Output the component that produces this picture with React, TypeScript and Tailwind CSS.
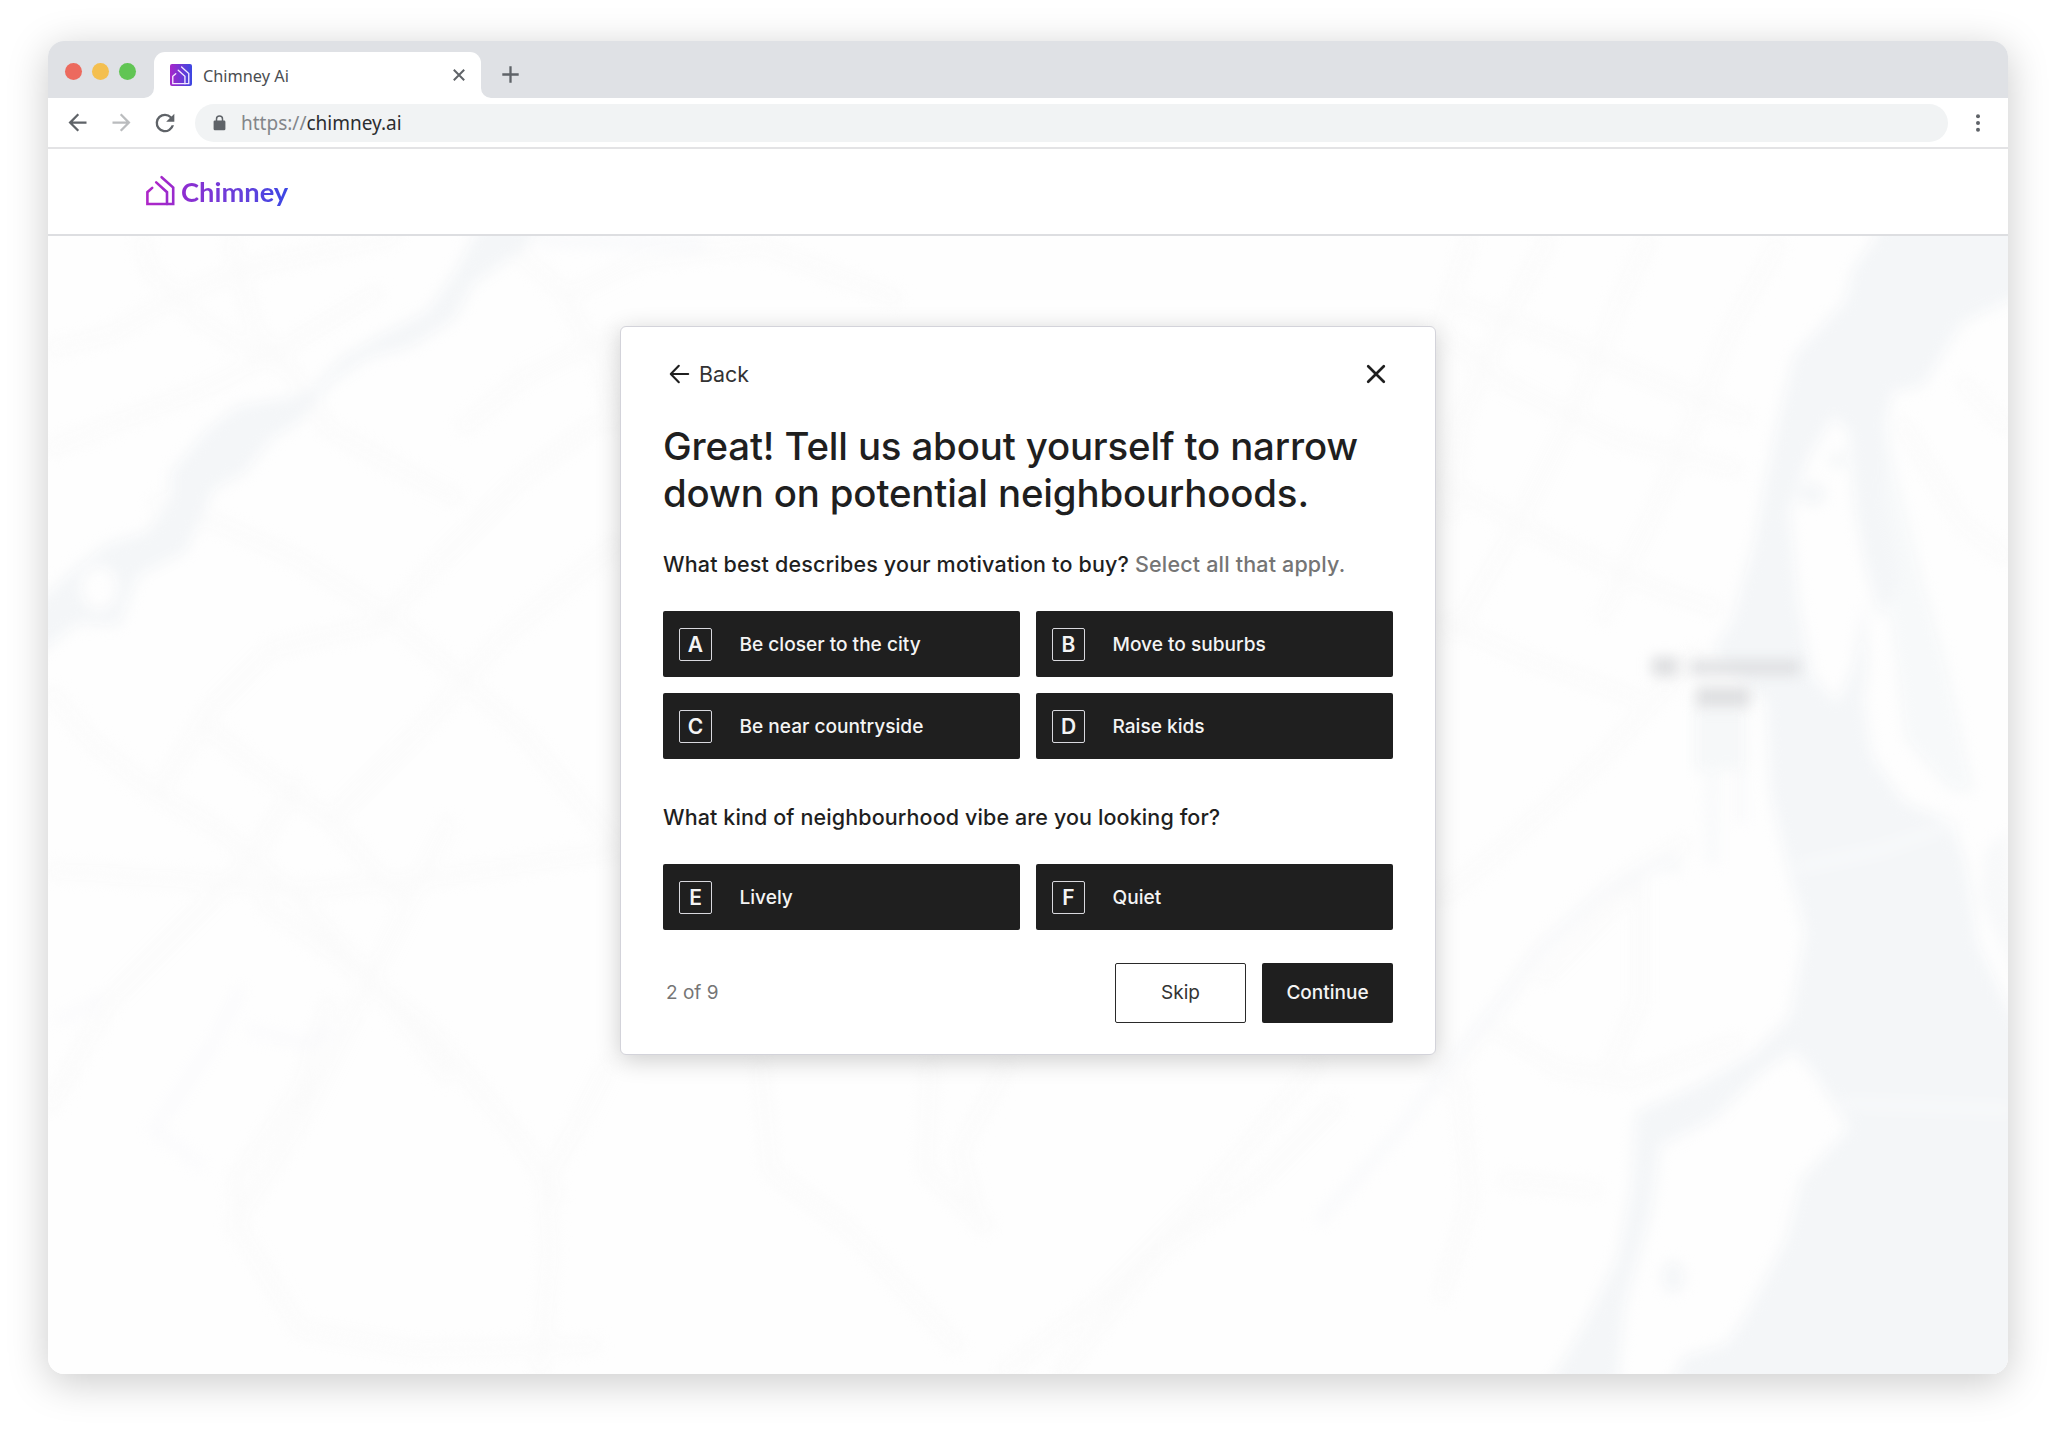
import React from "react";

const SANS = "font-['Inter',sans-serif]";
const NOTO = "font-['Noto_Sans',sans-serif]";

function HouseMark({ stroke, width = 2.6 }: { stroke: string; width?: number }) {
  return (
    <g fill="none" stroke={stroke} strokeWidth={width} strokeLinecap="round" strokeLinejoin="miter">
      <path d="M6.2 12.9 1.4 17.2V29H27.2V12.6L15.6 2.2" />
      <path d="M10.2 7.4 21 17.2V29" />
    </g>
  );
}

function TabStrip() {
  return (
    <div className="flex h-[57px] items-end bg-[#dfe1e5] pl-[17px]">
      <div className="flex h-full items-center gap-[10px] pt-[3px]">
        <span className="size-[17px] rounded-full bg-[#ec6a5e]" />
        <span className="size-[17px] rounded-full bg-[#f4bf4f]" />
        <span className="size-[17px] rounded-full bg-[#61c554]" />
      </div>
      <div className="relative ml-[18px] flex h-[46px] w-[327px] items-center rounded-t-[11px] bg-white pl-4 pr-[15px]">
        <svg className="absolute -left-[10px] bottom-0" width="10" height="10">
          <path d="M10 0V10H0A10 10 0 0 0 10 0Z" fill="#fff" />
        </svg>
        <svg className="absolute -right-[10px] bottom-0" width="10" height="10">
          <path d="M0 0V10H10A10 10 0 0 1 0 0Z" fill="#fff" />
        </svg>
        <svg width="22" height="22" viewBox="0 0 22 22">
          <defs>
            <linearGradient id="fav" x1="0" x2="1">
              <stop offset="0" stopColor="#a726c9" />
              <stop offset="1" stopColor="#3b47e2" />
            </linearGradient>
          </defs>
          <rect width="22" height="22" rx="2" fill="url(#fav)" />
          <g transform="translate(1.9 1.7) scale(.62)">
            <HouseMark stroke="#f3e8ff" width={2.2} />
          </g>
        </svg>
        <span className={`ml-[11px] pt-[2px] text-[16.3px] text-[#4a4d51] ${NOTO}`}>Chimney Ai</span>
        <svg className="ml-auto" width="14" height="14" viewBox="0 0 14 14" stroke="#5f6368" strokeWidth="2" fill="none">
          <path d="M1.8 1.8 12.2 12.2M12.2 1.8 1.8 12.2" />
        </svg>
      </div>
      <svg className="mb-[15px] ml-[21px]" width="17" height="17" viewBox="0 0 17 17" stroke="#5f6368" strokeWidth="2.3" fill="none">
        <path d="M8.5.3V16.7M.3 8.5H16.7" />
      </svg>
    </div>
  );
}

function AddressBar() {
  return (
    <div className="flex h-[51px] items-center border-b-2 border-[#e3e3e5] bg-white pl-[16px]">
      <svg width="27" height="27" viewBox="0 0 24 24" fill="#5f6368">
        <path d="M20 11H7.83l5.59-5.59L12 4l-8 8 8 8 1.41-1.41L7.83 13H20z" />
      </svg>
      <svg className="ml-[17px]" width="27" height="27" viewBox="0 0 24 24" fill="#babcbe">
        <path d="m12 4-1.41 1.41L16.17 11H4v2h12.17l-5.58 5.59L12 20l8-8z" />
      </svg>
      <svg className="ml-[16px]" width="28" height="28" viewBox="0 0 24 24" fill="#5f6368">
        <path d="M17.65 6.35A7.96 7.96 0 0 0 12 4a8 8 0 1 0 7.73 10h-2.08A6 6 0 1 1 12 6c1.66 0 3.14.69 4.22 1.78L13 11h7V4z" />
      </svg>
      <div className="ml-[16px] flex h-[38px] w-[1753px] items-center rounded-full bg-[#f1f3f4] pl-[18px]">
        <svg width="13" height="16" viewBox="0 0 13 16">
          <rect x=".6" y="5.4" width="11.8" height="9.8" rx="1.3" fill="#5f6368" />
          <path d="M3.5 6V3.9a3 3 0 0 1 6 0V6" fill="none" stroke="#5f6368" strokeWidth="1.5" />
        </svg>
        <span className={`ml-[15px] pt-px text-[19px] text-[#2b2d30] ${NOTO}`}>
          <span className="text-[#83868a]">https://</span>chimney.ai
        </span>
      </div>
      <svg className="ml-[28px]" width="4" height="18" viewBox="0 0 4 18" fill="#5f6368">
        <circle cx="2" cy="2.2" r="2" />
        <circle cx="2" cy="9" r="2" />
        <circle cx="2" cy="15.8" r="2" />
      </svg>
    </div>
  );
}

function SiteHeader() {
  return (
    <header className="flex h-[87px] items-center border-b-2 border-[#dddee1] bg-white pl-[98px]">
      <svg className="mb-[2px]" width="29" height="31" viewBox="0 0 29 31">
        <defs>
          <linearGradient id="mark" x1="0" x2="1">
            <stop offset="0" stopColor="#ae26c8" />
            <stop offset="1" stopColor="#9a2acd" />
          </linearGradient>
        </defs>
        <HouseMark stroke="url(#mark)" />
      </svg>
      <span className="ml-[6px] mt-px bg-linear-to-r from-[#8f2bd0] to-[#3a47e4] bg-clip-text font-['Lato',sans-serif] text-[27.3px] font-bold leading-[36px] text-transparent">
        Chimney
      </span>
    </header>
  );
}

const ROADS = [
  "M48 350 110 335 170 300 240 270 400 236",
  "M140 236 150 270 200 320 240 345 290 370 330 430 420 480 460 500",
  "M230 236 255 330 290 370",
  "M48 450 110 425 200 390 280 350 380 290",
  "M150 500 210 520 300 560 380 610 440 660 520 730 620 850",
  "M48 690 90 740 150 790 220 830 300 900 380 990 450 1080",
  "M200 720 260 770 330 820 400 900",
  "M160 790 210 710 270 650 330 635 380 625 440 560 520 480 600 420",
  "M330 820 420 730 500 640 620 540",
  "M48 870 180 880 300 890 420 880 620 850",
  "M48 1110 110 1000 180 930 250 860 300 780",
  "M230 1230 300 1120 350 1020 400 920 450 820",
  "M240 1230 235 1180 300 1090 330 1000",
  "M240 1230 300 1330 420 1350 600 1345",
  "M540 1374 550 1250 545 1180 580 1120 610 1060",
  "M260 900 330 950 430 1030 520 1140 560 1200",
  "M460 430 520 380 620 330",
  "M500 236 560 290 600 360 615 430",
  "M560 300 640 260 760 246 900 300",
  "M760 1060 770 1170 850 1230 960 1350",
  "M930 1060 925 1170 990 1230",
  "M1010 1060 960 1150 980 1230",
  "M1320 1060 1200 1200 1100 1300 1000 1374",
  "M1340 1100 1260 1180 1160 1250 1060 1374",
  "M1450 300 1560 340 1700 400 1750 420",
  "M1470 236 1440 330 1500 380 1620 440 1740 470",
  "M1550 236 1500 330 1460 420 1450 520",
  "M1650 236 1620 300 1580 400 1520 520 1450 640",
  "M1780 240 1730 330 1690 430 1650 520 1600 620",
  "M1440 480 1550 540 1660 590 1720 610",
  "M1440 620 1530 660 1640 700",
  "M1690 840 1620 880 1540 950 1490 1020 1440 1090",
  "M1700 650 1600 760 1500 850 1440 900",
  "M1480 1020 1560 1070 1630 1080 1740 1040",
  "M1460 1080 1470 1200 1440 1300",
  "M1540 980 1600 920 1640 880 1640 1000 1610 1070",
  "M1500 1180 1600 1190",
  "M1960 380 2008 430M1900 420 1960 520 2008 560",
];

function MapBackdrop() {
  return (
    <svg className="absolute inset-0 size-full" viewBox="48 236 1960 1138" preserveAspectRatio="none">
      <defs>
        <filter id="soft" x="-5%" y="-5%" width="110%" height="110%" colorInterpolationFilters="sRGB">
          <feGaussianBlur stdDeviation="7" />
        </filter>
        <filter id="label" x="-30%" y="-50%" width="160%" height="200%" colorInterpolationFilters="sRGB">
          <feGaussianBlur stdDeviation="6.5" />
        </filter>
      </defs>
      <rect x="48" y="236" width="1960" height="1138" fill="#fefefe" />
      <g filter="url(#soft)">
        <g fill="none" stroke="#fbfbfb" strokeWidth="14" strokeLinejoin="round">
          {ROADS.map((d) => (
            <path key={d} d={d} />
          ))}
        </g>
        <g fill="#f4f6f8">
          <path
            fillRule="evenodd"
            d="M482 220 455 271 427 311 380 335 340 358 312 390 285 398 237 406 206 430 170 473 170 501 146 532 107 544 75 568 30 610V660L79 623 119 626 138 576 186 552 214 489 245 473 273 437 300 422 332 382 368 358 411 347 455 319 474 283 498 267 526 248 545 220ZM99 566a18 22 0 1 0 .1 0Z"
          />
          <path d="M1880 210 1876 236 1852 270 1845 301 1794 355 1782 404 1766 475 1754 542 1731 623 1712 650 1750 690 1766 700 1770 793 1790 877 1805 932 1790 1016 1754 1053 1691 1088 1636 1112 1631 1188 1617 1258 1585 1323 1545 1390H1617L1625 1304 1652 1211 1660 1146 1715 1118 1762 1072 1794 1051 1813 1072 1849 1128 1801 1179 1786 1239 1746 1314 1727 1344 1684 1356 1666 1390H2030V1040L2008 1007 1978 942 1966 863 1951 821 1904 802 1872 756 1864 700 1868 667 1864 600 1853 667 1837 703 1813 676 1798 600 1790 511 1809 457 1833 417 1849 431 1855 511 1864 560 1880 620 1900 580 1884 500 1886 420 1893 392 1923 386 1951 341 1963 323 2030 290V210Z" />
          <path d="M1880 400 1900 489 1923 582 1947 667 1974 793 1950 790 1905 740 1896 660 1884 560Z" opacity=".7" />
          <path d="M2008 830 1985 850 1980 900 2020 990Z" opacity=".5" />
          <ellipse cx="1812" cy="494" rx="13" ry="11" />
          <ellipse cx="1838" cy="460" rx="9" ry="8" opacity=".8" />
          <path d="M1694 705H1746V770H1694Z" opacity=".8" />
          <path d="M1704 770H1720V865H1706ZM1734 770H1746V822H1734Z" opacity=".45" />
          <ellipse cx="1673" cy="1277" rx="11" ry="16" />
          <ellipse cx="1674" cy="865" rx="10" ry="8" opacity=".5" />
        </g>
        <g fill="none" stroke="#f4f6f9" strokeLinecap="round">
          <path d="M1668 860 1600 895 1540 950 1490 1015 1440 1075 1400 1130 1320 1220" strokeWidth="9" opacity=".5" />
          <path d="M240 990 215 1040 155 1130 200 1165M60 1020 100 1000M250 1030 310 1045 330 1030" strokeWidth="9" opacity=".4" />
          <path d="M545 240 700 244" strokeWidth="12" opacity=".5" />
        </g>
        <path d="M1795 868 1880 850 1960 822M1840 1103 2010 1110" fill="none" stroke="#fafbfc" strokeWidth="7" />
      </g>
      <g fill="#dddee0" filter="url(#label)">
        <rect x="1652" y="657" width="26" height="19" />
        <rect x="1690" y="660" width="110" height="15" opacity=".9" />
        <rect x="1696" y="687" width="54" height="20" />
      </g>
    </svg>
  );
}

function Option({ letter, label }: { letter: string; label: string }) {
  return (
    <button className="flex h-[66px] items-center rounded-[2px] bg-[#1f1f1f] pl-4 text-left text-[#f4f4f4]">
      <span className="flex size-[33px] items-center justify-center rounded-[2px] border border-[#d9d9de] text-[21px] font-semibold leading-none">
        {letter}
      </span>
      <span className="ml-[27.5px] text-[19.1px] font-medium">{label}</span>
    </button>
  );
}

function QuestionCard() {
  return (
    <main
      className={`relative h-[729px] w-[816px] rounded-[6px] border border-[#d3d3da] bg-white px-[42px] text-[#1f1f1f] shadow-[0_5px_24px_rgba(0,0,0,0.2)] ${SANS}`}
    >
      <div className="mt-[32px] flex h-[30px] items-center">
        <button className="flex items-center pl-[6px]">
          <svg width="21" height="20" viewBox="0 0 21 20" fill="none" stroke="#1f1f1f" strokeWidth="2.1" strokeLinecap="round" strokeLinejoin="round">
            <path d="M19.2 10H2M9.8 1.8 1.8 10l8 8.2" />
          </svg>
          <span className="ml-[9px] text-[21.4px] text-[#333]">Back</span>
        </button>
        <svg className="ml-auto mr-[6px]" width="22" height="22" viewBox="0 0 22 22" fill="none" stroke="#1f1f1f" strokeWidth="2.7" strokeLinecap="round">
          <path d="M3.2 3.2 18.8 18.8M18.8 3.2 3.2 18.8" />
        </svg>
      </div>
      <h1 className="mt-[34px] whitespace-nowrap text-[38.4px] font-medium leading-[46.7px] tracking-[-0.15px]">
        Great! Tell us about yourself to narrow
        <br />
        down on potential neighbourhoods.
      </h1>
      <p className="mt-[32px] whitespace-nowrap text-[21.5px] font-medium leading-[32px] tracking-[0.17px]">
        What best describes your motivation to buy? <span className="text-[#757575]">Select all that apply.</span>
      </p>
      <div className="mt-[31px] grid grid-cols-2 gap-4">
        <Option letter="A" label="Be closer to the city" />
        <Option letter="B" label="Move to suburbs" />
        <Option letter="C" label="Be near countryside" />
        <Option letter="D" label="Raise kids" />
      </div>
      <p className="mt-[42px] whitespace-nowrap text-[21.5px] font-medium leading-[32px] tracking-[0.11px]">
        What kind of neighbourhood vibe are you looking for?
      </p>
      <div className="mt-[31px] grid grid-cols-2 gap-x-4">
        <Option letter="E" label="Lively" />
        <Option letter="F" label="Quiet" />
      </div>
      <div className="mt-[32px] flex h-[61px] items-center gap-4 text-[19px]">
        <span className="mr-auto pl-[3px] text-[#757575]">2 of 9</span>
        <button className="h-[60px] w-[131px] rounded-[2px] border border-[#2a2a2a] text-[#333]">Skip</button>
        <button className="h-[60px] w-[131px] rounded-[2px] bg-[#1f1f1f] font-medium text-[#f4f4f4]">Continue</button>
      </div>
    </main>
  );
}

export default function App() {
  return (
    <div className="h-[1429px] w-[2056px] overflow-hidden bg-white px-12 pt-[41px]">
      <div className="flex h-[1333px] flex-col overflow-hidden rounded-[16px] bg-white shadow-[0_8px_40px_rgba(0,0,0,0.21)]">
        <TabStrip />
        <AddressBar />
        <SiteHeader />
        <section className="relative flex flex-1 items-start justify-center pt-[90px]">
          <MapBackdrop />
          <QuestionCard />
        </section>
      </div>
    </div>
  );
}
